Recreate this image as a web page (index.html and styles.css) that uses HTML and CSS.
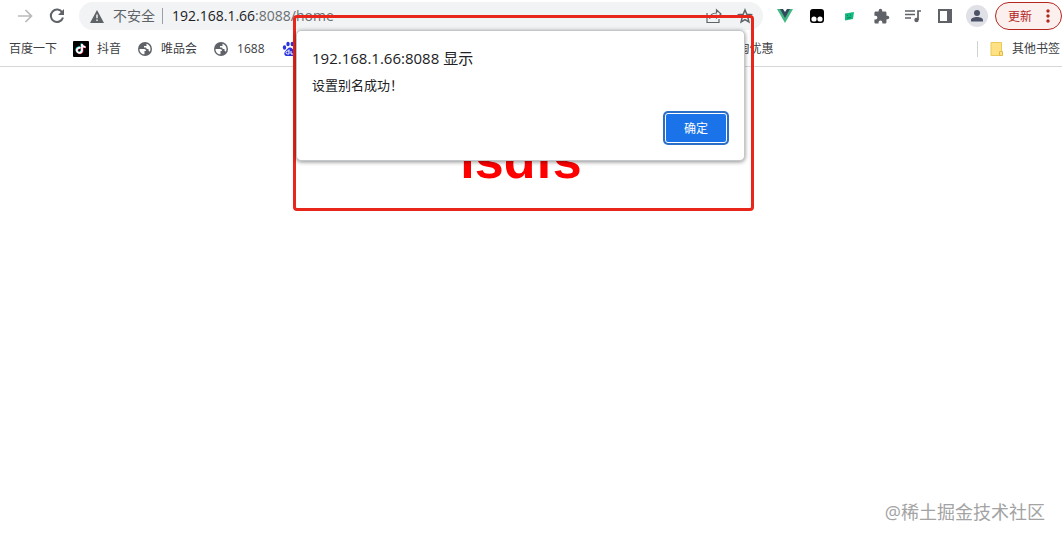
FILE: index.html
```
<!DOCTYPE html>
<html lang="zh-CN">
<head>
<meta charset="utf-8">
<title>home</title>
<link rel="stylesheet" href="styles.css">
</head>
<body>
<header class="browser">
  <div class="toolbar">
    <button class="icon-btn faded" aria-label="前进"><svg width="16" height="16" viewBox="0 0 16 16" fill="none" stroke="currentColor" stroke-width="1.7"><path d="M1 8h13M8.500 2l6 6-6 6"/></svg></button>
    <button class="icon-btn" aria-label="重新加载"><svg width="16" height="16" viewBox="0 0 16 16"><path fill="none" stroke="currentColor" stroke-width="2" d="M13.300 4.500A6.200 6.200 0 1 0 14 9.500"/><path fill="currentColor" d="M15 1v6H9z"/></svg></button>
    <div class="address">
      <svg width="14" height="13" viewBox="0 0 14 13"><path fill="#5f6368" d="M7 0l7 13H0z"/><path stroke="#f1f3f4" stroke-width="1.500" d="M7 4.500v3.700M7 9.500v1.600"/></svg>
      <span class="insecure">不安全</span>
      <span class="url"><b>192.168.1.66</b>:8088/home</span>
      <button class="icon-btn share" aria-label="分享"><svg width="16" height="16" viewBox="0 0 16 16" fill="none" stroke="currentColor" stroke-width="1.200"><path d="M1 5v9.500h12V11M3.500 10.500c.6-3.500 3-5.500 7-5.500V1.800L15 6l-4.500 4V7.300c-3 0-5 .7-7 3.200z"/></svg></button>
      <button class="icon-btn" aria-label="收藏"><svg width="16" height="16" viewBox="0 0 16 16" fill="none" stroke="currentColor" stroke-width="1.500"><path d="M8 2l1.800 4.200 4.500.4-3.400 3 1 4.400L8 11.700 4.100 14l1-4.400-3.400-3 4.500-.4z"/></svg></button>
    </div>
    <div class="extensions">
      <button class="icon-btn" aria-label="Vue"><svg width="16" height="16" viewBox="0 0 16 16"><path fill="#41b883" d="M0 1h16L8 15z"/><path fill="#35495e" d="M3 1h10L8 10z"/><path fill="#fff" d="M6 1h4L8 4z"/></svg></button>
      <button class="icon-btn" aria-label="扩展"><svg width="16" height="16" viewBox="0 0 16 16"><rect x="1" y="1" width="14" height="14" rx="3"/><circle cx="5" cy="11" r="2.600" fill="#fff"/><circle cx="11" cy="11" r="2.600" fill="#fff"/></svg></button>
      <button class="icon-btn" aria-label="助手"><svg width="16" height="16" viewBox="0 0 16 16"><path fill="#12b980" d="M4 5.500l9-1.500-1 7-8 1.500z"/><path stroke="#087b54" fill="none" d="M6 7.500h1M9 7h1M6 10l4-.5"/></svg></button>
      <button class="icon-btn" aria-label="扩展程序"><svg width="17" height="17" viewBox="0 0 24 24" fill="currentColor"><path d="M20.500 11H19V7c0-1.100-.9-2-2-2h-4V3.500a2.500 2.500 0 0 0-5 0V5H4c-1.100 0-2 .9-2 2v3.800h1.500a2.700 2.700 0 0 1 0 5.400H2V20c0 1.100.9 2 2 2h3.800v-1.500a2.700 2.700 0 0 1 5.400 0V22H17c1.100 0 2-.9 2-2v-4h1.500a2.500 2.500 0 0 0 0-5z"/></svg></button>
      <button class="icon-btn" aria-label="媒体"><svg width="16" height="16" viewBox="0 0 16 16" fill="none" stroke="currentColor" stroke-width="1.700"><path d="M0 3h10M0 6.500h10M0 10h6M13 12V3h3"/><circle cx="11.500" cy="12" r="2.200" fill="currentColor" stroke="none"/></svg></button>
      <button class="icon-btn" aria-label="侧边栏"><svg width="16" height="16" viewBox="0 0 16 16"><path fill="currentColor" fill-rule="evenodd" d="M1 1h14v14H1zM3 3v10h7V3z"/></svg></button>
      <button class="icon-btn avatar" aria-label="用户"><svg width="14" height="14" viewBox="0 0 14 14" fill="#4c5267"><circle cx="7" cy="4" r="3"/><path d="M1 12.500V11c0-2 3-3 6-3s6 1 6 3v1.500z"/></svg></button>
    </div>
    <button class="update">更新<svg width="4" height="14" viewBox="0 0 4 14" fill="#b3261e"><circle cx="2" cy="2" r="1.700"/><circle cx="2" cy="7" r="1.700"/><circle cx="2" cy="12" r="1.700"/></svg></button>
  </div>
  <nav class="bookmarks">
    <a href="#">百度一下</a>
    <a href="#"><svg width="16" height="16" viewBox="0 0 16 16"><rect width="16" height="16" rx="1"/><g fill="none" stroke-width="1.800"><path stroke="#25f4ee" d="M7 6.500a2.600 2.600 0 1 0 1.500 2.700V2.500c.2 2 1.500 3 3.500 3.100"/><path stroke="#fe2c55" d="M8 7.300a2.600 2.600 0 1 0 1.500 2.700V3.300c.2 2 1.500 3 3.500 3.100"/><path stroke="#fff" d="M7.500 7a2.600 2.600 0 1 0 1.500 2.700V3c.2 2 1.500 3 3.500 3.100"/></g></svg>抖音</a>
    <a href="#"><svg width="16" height="16" viewBox="0 0 16 16"><circle cx="8" cy="8" r="7" fill="#5f6368"/><path fill="#fff" d="M2.500 8H7c1.500 0 2 .8 2 2H7.500v3.300C4.500 13.300 2.300 11 2.500 8zM9.500 2.800c2.500.7 4 2.700 4 5.200 0 1-.3 2-.8 2.800L11.500 9.500V8H9.800L9 6.500H7V5h2.500z"/></svg>唯品会</a>
    <a href="#"><svg width="16" height="16" viewBox="0 0 16 16"><circle cx="8" cy="8" r="7" fill="#5f6368"/><path fill="#fff" d="M2.500 8H7c1.500 0 2 .8 2 2H7.500v3.300C4.500 13.300 2.300 11 2.500 8zM9.500 2.800c2.500.7 4 2.700 4 5.200 0 1-.3 2-.8 2.800L11.500 9.500V8H9.800L9 6.500H7V5h2.500z"/></svg>1688</a>
    <a class="baidu" href="#" aria-label="百度"><svg width="16" height="16" viewBox="0 0 16 16" fill="#2932e1"><ellipse cx="2.500" cy="6.500" rx="1.700" ry="2.200"/><ellipse cx="6" cy="3" rx="1.700" ry="2.300"/><ellipse cx="10.300" cy="3" rx="1.700" ry="2.300"/><ellipse cx="13.500" cy="6.500" rx="1.700" ry="2.200"/><path d="M8 6.500c2 0 3 2 4.500 3.500C15 13 13 15 11 15H5c-2 0-4-2-1.500-5C5 8.500 6 6.500 8 6.500z"/><path fill="none" stroke="#fff" d="M7 8.500V13H5.500a1 1 0 0 1 0-3H7M9 10v3h2.500v-3"/></svg></a>
    <a class="deals" href="#">淘优惠</a>
    <a class="other" href="#"><svg width="14" height="16" viewBox="0 0 14 16"><path fill="#ffe082" stroke="#e8c95a" d="M1 1.500h10.500v13H1z"/><path fill="#ffe082" stroke="#e0bc45" d="M9.500 10.500h3v4h-3z"/></svg>其他书签</a>
  </nav>
</header>
<main class="page"><h1>lsdfs</h1></main>
<div class="highlight">
  <section class="dialog" role="dialog" aria-labelledby="dialog-title">
    <h2 id="dialog-title">192.168.1.66:8088 显示</h2>
    <p>设置别名成功！</p>
    <button class="confirm">确定</button>
  </section>
</div>
<footer class="watermark">@稀土掘金技术社区</footer>
</body>
</html>
```
FILE: styles.css
```
* { box-sizing: border-box; }
body {
  margin: 0;
  min-height: 100vh;
  display: flex;
  flex-direction: column;
  position: relative;
  background: #fff;
  color: #3c4043;
  font-family: "Open Sans", "Noto Sans CJK SC", sans-serif;
  font-size: 12px;
}
button { font: inherit; border: 0; padding: 0; background: none; color: inherit; }
a { color: inherit; text-decoration: none; }
svg { display: block; flex: none; }
.browser { border-bottom: 1px solid #d5d7d9; }
.toolbar { display: flex; align-items: center; height: 32px; padding-left: 17px; }
.icon-btn { display: flex; align-items: center; justify-content: center; width: 16px; height: 16px; flex: none; color: #5f6368; }
.faded { color: #b8babd; }
.toolbar > .icon-btn + .icon-btn { margin-left: 16px; }
.address {
  display: flex; align-items: center; flex: 1;
  height: 28px; margin-left: 14px; padding: 0 10px 0 11px;
  border-radius: 14px; background: #f1f3f4; font-size: 14px; line-height: 20px;
}
.insecure { margin-left: 9px; padding-right: 7px; border-right: 1px solid #9aa0a6; line-height: 16px; color: #5f6368; }
.url { margin-left: 9px; color: #6b6f73; }
.url b { font-weight: 400; color: #202124; }
.share { margin-left: auto; margin-right: 15px; }
.extensions { display: flex; align-items: center; gap: 16px; margin-left: 14px; }
.avatar { width: 22px; height: 22px; margin: 0 -3px; border-radius: 50%; background: #dfe1e7; }
.update {
  display: flex; align-items: center; justify-content: space-between;
  width: 67px; height: 28px; margin-left: 10px; padding: 0 11px 0 12px;
  border: 1px solid #b3261e; border-radius: 14px; background: #fcf0ef; color: #b3261e;
}
.bookmarks { display: flex; align-items: center; height: 34px; padding: 0 2px 0 9px; gap: 16px; line-height: 18px; }
.bookmarks a { display: flex; align-items: center; gap: 8px; white-space: nowrap; }
.bookmarks .baidu { margin-left: 1px; }
.bookmarks .deals { margin-left: 424px; }
.bookmarks .other { margin-left: auto; padding-left: 12px; border-left: 1px solid #d0d2d5; line-height: 16px; }
.page { flex: 1; padding: 57px 20px 0 0; text-align: center; }
.page h1 { margin: 0; color: #f00; font: bold 52px/72px "Liberation Sans", Arial, sans-serif; }
.highlight {
  position: absolute; top: 15px; left: 50%; width: 461px; height: 196px;
  margin-left: -238px; padding: 12px 6px 0 0;
  border: 3px solid #e8261c; border-radius: 4px;
}
.dialog {
  display: flex; flex-direction: column; height: 131px; padding: 16px 15px 17px;
  border: 1px solid #c4c7ca; border-radius: 5px; background: #fff;
  box-shadow: 0 1px 4px rgba(0, 0, 0, .45); color: #202124;
}
.dialog h2 { margin: 0; font-size: 15px; font-weight: 400; line-height: 22px; }
.dialog p { margin: 7px 0 0; font-size: 13px; line-height: 18px; }
.confirm {
  align-self: flex-end; width: 62px; height: 30px; margin: auto 2px 0 0;
  border: 1px solid #fff; border-radius: 3px; background: #1a73e8; color: #fff;
  box-shadow: 0 0 0 2px #2a70c8;
}
.watermark {
  align-self: flex-end; padding: 0 17px 15px 0;
  color: #a3a3a3; font-size: 18px; line-height: 26px;
}
```
